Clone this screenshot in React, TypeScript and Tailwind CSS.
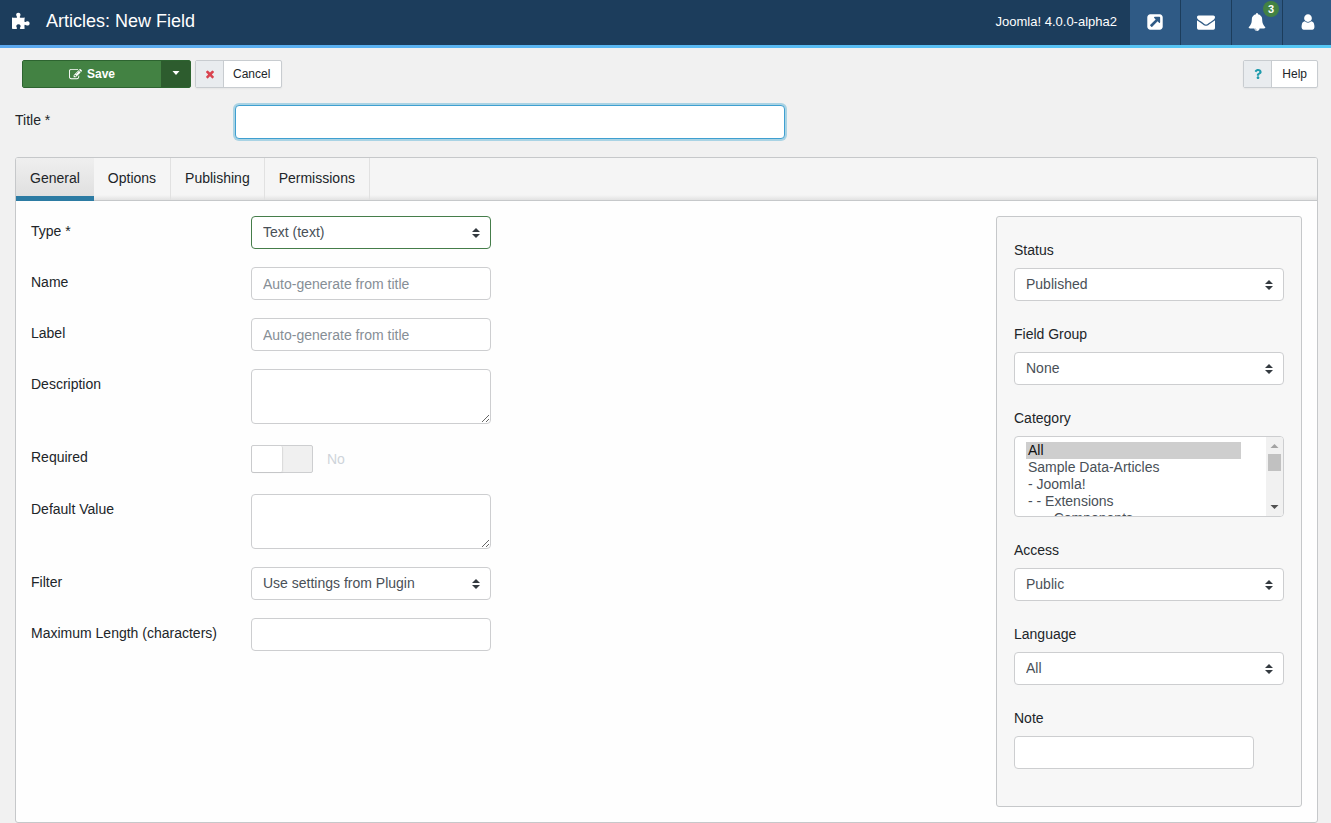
import { useState, type ReactNode } from 'react';
import { FaQuestion } from 'react-icons/fa';

const controlClass =
  'block h-[33px] w-full rounded-[4px] border bg-white px-[11px] text-[14px] text-[#495057] placeholder:text-[#868e96]';

const textareaClass = 'block h-[55px] w-full rounded-[4px] border border-[#cdced0] bg-white px-[11px] py-[6px]';

const tabs = ['General', 'Options', 'Publishing', 'Permissions'];

const categories = ['All', 'Sample Data-Articles', '- Joomla!', '- - Extensions', '- - - Components', '- - - - Weblinks'];

const icons = {
  external:
    'M1408 928v-480q0-26-19-45t-45-19h-480q-42 0-59 39-17 41 14 70l144 144-534 534q-19 19-19 45t19 45l102 102q19 19 45 19t45-19l534-534 144 144q18 19 45 19 12 0 25-5 39-17 39-59zm256-512v960q0 119-84.5 203.5t-203.5 84.5h-960q-119 0-203.5-84.5t-84.5-203.5v-960q0-119 84.5-203.5t203.5-84.5h960q119 0 203.5 84.5t84.5 203.5z',
  envelope:
    'M1792 710v794q0 66-47 113t-113 47h-1472q-66 0-113-47t-47-113v-794q44 49 101 87 362 246 497 345 57 42 92.5 65.5t94.5 48 110 24.5h2q51 0 110-24.5t94.5-48 92.5-65.5q170-123 498-345 57-39 100-87zm0-294q0 79-49 151t-122 123q-376 261-468 325-10 7-42.5 31t-54 38.5-52 32.5-57.5 27-50 9h-2q-23 0-50-9t-57.5-27-52-32.5-54-38.5-42.5-31q-91-64-262-182.5t-205-142.5q-62-42-117-115.5t-55-136.5q0-78 41.5-130t118.5-52h1472q65 0 112.5 47t47.5 113z',
  bell: 'M912 1696q0-16-16-16-59 0-101.5-42.5t-42.5-101.5q0-16-16-16t-16 16q0 73 51.5 124.5t124.5 51.5q16 0 16-16zm816-288q0 52-38 90t-90 38h-448q0 106-75 181t-181 75-181-75-75-181h-448q-52 0-90-38t-38-90q50-42 91-88t85-119.5 74.5-158.5 50-206 19.5-260q0-152 117-282.5t307-158.5q-8-19-8-39 0-40 28-68t68-28 68 28 28 68q0 20-8 39 190 28 307 158.5t117 282.5q0 139 19.5 260t50 206 74.5 158.5 85 119.5 91 88z',
  user: 'M1536 1399q0 109-62.5 187t-150.5 78h-854q-88 0-150.5-78t-62.5-187q0-85 8.5-160.5t31.5-152 58.5-131 94-89 134.5-34.5q131 128 313 128t313-128q76 0 134.5 34.5t94 89 58.5 131 31.5 152 8.5 160.5zm-256-887q0 159-112.5 271.5t-271.5 112.5-271.5-112.5-112.5-271.5 112.5-271.5 271.5-112.5 271.5 112.5 112.5 271.5z',
  edit: 'M888 1184l116-116-152-152-116 116v56h96v96h56zm440-720q-16-16-33 1l-350 350q-17 17-1 33t33-1l350-350q17-17 1-33zm80 594v190q0 119-84.5 203.5t-203.5 84.5h-832q-119 0-203.5-84.5t-84.5-203.5v-832q0-119 84.5-203.5t203.5-84.5h832q63 0 117 25 15 7 18 23 3 17-9 29l-49 49q-14 14-32 8-23-6-45-6h-832q-66 0-113 47t-47 113v832q0 66 47 113t113 47h832q66 0 113-47t47-113v-126q0-13 9-22l64-64q15-15 35-7t20 29zm-96-738l288 288-672 672h-288v-288zm444 132l-92 92-288-288 92-92q28-28 68-28t68 28l152 152q28 28 28 68t-28 68z',
  times:
    'M1490 1322q0 40-28 68l-136 136q-28 28-68 28t-68-28l-294-294-294 294q-28 28-68 28t-68-28l-136-136q-28-28-28-68t28-68l294-294-294-294q-28-28-28-68t28-68l136-136q28-28 68-28t68 28l294 294 294-294q28-28 68-28t68 28l136 136q28 28 28 68t-28 68l-294 294 294 294q28 28 28 68z',
};

function Icon({ name, className }: { name: keyof typeof icons; className: string }) {
  return (
    <svg viewBox="0 0 1792 1792" fill="currentColor" className={className} aria-hidden="true">
      <path d={icons[name]} />
    </svg>
  );
}

function PuzzleIcon() {
  return (
    <svg viewBox="0 0 18 18" fill="currentColor" className="ml-3 h-[18px] w-[18px]" aria-hidden="true">
      <path d="M0 5.500c1.500.4 3.500.5 4.600.2.900-.3.300-1-.1-1.700C3.600 2.400 4.500.8 6.300.8s2.800 1.600 1.900 3.200c-.4.700-.8 1.400.2 1.700 1.100.3 3 .1 4.400-.2-.2 1.400-.5 3-.3 4 .2.900.9.600 1.600.200 1.700-1 3.500-.1 3.500 1.700s-1.800 2.700-3.400 1.800c-.8-.4-1.500-.8-1.700.1-.2 1.100 0 2.200.2 3.400-1.500.2-3 .4-4.100.2-1-.2-.8-.9-.3-1.700.9-1.500 0-3-1.800-3s-2.800 1.500-1.900 3c.5.800.7 1.500-.3 1.700-1.200.200-2.800 0-4.300-.2z" />
    </svg>
  );
}

interface SelectProps {
  id: string;
  options: string[];
  valid?: boolean;
}

function Select({ id, options, valid }: SelectProps) {
  return (
    <div className="relative w-full">
      <select id={id} className={`${controlClass} appearance-none ${valid ? 'border-[#457d4a]' : 'border-[#cdced0]'}`}>
        {options.map((option) => (
          <option key={option}>{option}</option>
        ))}
      </select>
      <svg
        viewBox="0 0 8 10"
        className="pointer-events-none absolute top-3 right-[11px] h-[10px] w-2"
        fill="#343a40"
        aria-hidden="true"
      >
        <path d="M4 0l4 4H0zM4 10L0 6h8z" />
      </svg>
    </div>
  );
}

function Row({ id, label, children }: { id: string; label: string; children: ReactNode }) {
  return (
    <div className="flex items-start">
      <label htmlFor={id} className="w-[220px] shrink-0 pt-1 leading-[22px]">
        {label}
      </label>
      <div className="w-60">{children}</div>
    </div>
  );
}

function SideField({ id, label, children }: { id: string; label: string; children: ReactNode }) {
  return (
    <div className="flex flex-col gap-[7px]">
      <label htmlFor={id} className="leading-[22px]">
        {label}
      </label>
      {children}
    </div>
  );
}

function CategoryList() {
  return (
    <div className="flex h-[81px] overflow-hidden rounded-[4px] border border-[#cdced0] bg-white">
      <select
        id="category"
        multiple
        defaultValue={['All']}
        className="h-full min-w-0 flex-1 overflow-y-auto py-[5px] pr-[25px] pl-[11px] text-[14px] text-[#495057] [scrollbar-width:none]"
      >
        {categories.map((category) => (
          <option key={category} className="h-[17px] min-h-0 px-[2px] py-0 leading-[17px]">
            {category}
          </option>
        ))}
      </select>
      <div className="flex w-[17px] flex-col items-center bg-[#f1f1f1]" aria-hidden="true">
        <svg viewBox="0 0 17 17" className="h-[17px] w-[17px]" fill="#a3a3a3">
          <path d="M8.500 7l4 4h-8z" />
        </svg>
        <div className="h-[17px] w-[13px] bg-[#c1c1c1]"></div>
        <svg viewBox="0 0 17 17" className="mt-auto h-[17px] w-[17px]" fill="#505050">
          <path d="M4.500 6h8l-4 4z" />
        </svg>
      </div>
    </div>
  );
}

function Header() {
  const cell = 'flex h-full w-[51px] items-center justify-center border-r border-[#1c3d5c] bg-[#2f5a85] pb-[2px]';

  return (
    <header className="bg-linear-to-r from-[#5aa7ee] to-[#55c8f5] pb-[3px]">
      <div className="flex h-[45px] items-center bg-[#1c3d5c] text-white">
        <div className="flex items-center pb-1">
          <PuzzleIcon />
          <h1 className="ml-4 text-[18px] leading-6">Articles: New Field</h1>
        </div>
        <span className="mr-[13px] ml-auto pb-[2px] text-[13px]">Joomla! 4.0.0-alpha2</span>
        <a href="#site" aria-label="Preview site" className={cell}>
          <Icon name="external" className="h-[18px] w-[18px]" />
        </a>
        <button aria-label="Messages" className={cell}>
          <Icon name="envelope" className="h-[18px] w-[18px]" />
        </button>
        <button aria-label="Notifications" className={`${cell} relative`}>
          <Icon name="bell" className="h-[18px] w-[18px]" />
          <span className="absolute top-[1px] right-[3px] h-4 rounded-full bg-[#438243] px-[5px] text-[11px] leading-4 font-bold">
            3
          </span>
        </button>
        <button aria-label="User menu" className="flex h-full w-12 items-center justify-center bg-[#2f5a85] pb-[2px] pl-[2px]">
          <Icon name="user" className="h-[18px] w-[18px]" />
        </button>
      </div>
    </header>
  );
}

function Toolbar() {
  return (
    <div className="flex h-7 items-stretch gap-1 text-[12px]">
      <div className="flex w-[169px] rounded-[2px] border border-[#2d6430] text-white">
        <button className="flex flex-1 items-center justify-center gap-[5px] bg-[#438243] font-bold">
          <Icon name="edit" className="h-[13px] w-[13px]" />
          Save
        </button>
        <button aria-label="More save options" className="flex w-[29px] items-center justify-center bg-[#2d5c2e]">
          <svg viewBox="0 0 8 4" className="mb-[2px] h-1 w-2" fill="currentColor">
            <path d="M0.500 0h7l-3.500 4z" />
          </svg>
        </button>
      </div>
      <button className="flex overflow-hidden rounded-[2px] border border-[#c8ccd0] bg-white shadow-xs">
        <span className="flex h-full w-7 items-center justify-center border-r border-[#c8ccd0] bg-[#e9ecef] text-[#d9434f]">
          <Icon name="times" className="h-3 w-3" />
        </span>
        <span className="pr-[11px] pl-[9px] leading-[26px]">Cancel</span>
      </button>
      <button className="ml-auto flex overflow-hidden rounded-[2px] border border-[#c8ccd0] bg-white shadow-xs">
        <span className="flex h-full w-7 items-center justify-center border-r border-[#c8ccd0] bg-[#e9ecef] text-[#1f9bac]">
          <FaQuestion className="h-[10px] w-[10px]" />
        </span>
        <span className="px-[10px] leading-[26px]">Help</span>
      </button>
    </div>
  );
}

export default function App() {
  const [activeTab, setActiveTab] = useState('General');

  return (
    <div className="min-h-screen bg-[#f1f1f1] font-['Liberation_Sans',Arial,sans-serif] text-[14px] text-[#212529]">
      <Header />
      <div className="pt-3 pr-[13px] pl-[22px]">
        <Toolbar />
      </div>

      <div className="flex items-start px-[15px] pt-[17px]">
        <label htmlFor="title" className="w-[220px] pt-1 leading-[22px]">
          Title *
        </label>
        <input
          id="title"
          type="text"
          className="h-[34px] w-[550px] rounded-[4px] border border-[#3f9fd0] bg-white px-[11px] shadow-[0_0_0_2px_#a9d3e4] outline-none"
        />
      </div>

      <main className="mt-[18px] mr-[13px] ml-[15px] overflow-hidden rounded-[3px] border border-[#c6c8ca] bg-[#fefefe]">
        <nav
          role="tablist"
          className="flex h-[43px] border-b border-[#c6c8ca] bg-[linear-gradient(to_top,#e2e2e2_0,#f5f5f5_5px)]"
        >
          {tabs.map((tab) => (
            <button
              key={tab}
              role="tab"
              aria-selected={activeTab === tab}
              onClick={() => setActiveTab(tab)}
              className={
                activeTab === tab
                  ? 'h-[43px] bg-linear-to-b from-[#efefef] to-[#dedede] px-[14px] pb-[2px] shadow-[inset_0_-5px_#2c7ba3]'
                  : 'border-r border-[#e1e1e1] pr-[14px] pb-px pl-[14px]'
              }
            >
              {tab}
            </button>
          ))}
        </nav>

        <div className="flex items-start justify-between p-[15px]">
          <form className="flex flex-col gap-[18px]">
            <Row id="type" label="Type *">
              <Select id="type" options={['Text (text)']} valid />
            </Row>
            <Row id="name" label="Name">
              <input id="name" type="text" placeholder="Auto-generate from title" className={`${controlClass} border-[#cdced0]`} />
            </Row>
            <Row id="label" label="Label">
              <input id="label" type="text" placeholder="Auto-generate from title" className={`${controlClass} border-[#cdced0]`} />
            </Row>
            <Row id="description" label="Description">
              <textarea id="description" className={textareaClass} />
            </Row>
            <Row id="required" label="Required">
              <div className="flex h-[34px] items-center gap-[14px]">
                <span className="flex h-7 w-[62px] rounded-[2px] border border-[#cdced0] bg-[#f0f0f0]">
                  <input
                    id="required"
                    type="checkbox"
                    role="switch"
                    className="h-[26px] w-[31px] appearance-none rounded-[2px] border-r border-[#dcdcdc] bg-white shadow-xs checked:ml-auto"
                  />
                </span>
                <span className="text-[#ced4da]">No</span>
              </div>
            </Row>
            <Row id="default-value" label="Default Value">
              <textarea id="default-value" className={textareaClass} />
            </Row>
            <Row id="filter" label="Filter">
              <Select id="filter" options={['Use settings from Plugin']} />
            </Row>
            <Row id="max-length" label="Maximum Length (characters)">
              <input id="max-length" type="text" className={`${controlClass} border-[#cdced0]`} />
            </Row>
          </form>

          <aside className="flex w-[306px] flex-col gap-[22px] rounded-[3px] border border-[#c6c8ca] bg-[#f7f7f7] px-[17px] pt-[22px] pb-[37px]">
            <SideField id="status" label="Status">
              <Select id="status" options={['Published', 'Unpublished']} />
            </SideField>
            <SideField id="group" label="Field Group">
              <Select id="group" options={['None']} />
            </SideField>
            <SideField id="category" label="Category">
              <CategoryList />
            </SideField>
            <SideField id="access" label="Access">
              <Select id="access" options={['Public', 'Registered']} />
            </SideField>
            <SideField id="language" label="Language">
              <Select id="language" options={['All']} />
            </SideField>
            <SideField id="note" label="Note">
              <input id="note" type="text" className={`${controlClass} max-w-60 border-[#cdced0]`} />
            </SideField>
          </aside>
        </div>
      </main>
    </div>
  );
}
